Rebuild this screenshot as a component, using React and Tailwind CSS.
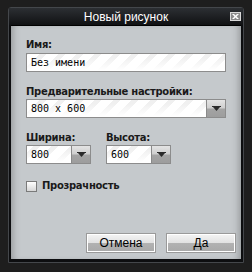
import React from 'react';

const stripes =
  'bg-[linear-gradient(to_bottom,rgba(255,255,255,0)_20%,#ffffff_95%),repeating-linear-gradient(-45deg,#ffffff_0px,#ffffff_8px,#f0f0f0_8px,#f0f0f0_13px)]';

const Arrow = () => (
  <svg width="9" height="6" viewBox="0 0 9 6">
    <rect x="0" y="0" width="9" height="1" fill="#2a2a2a" />
    <polygon points="1,1 8,1 4.5,5" fill="#2a2a2a" />
  </svg>
);

const DropButton = () => (
  <div className="w-[19px] h-full border-l border-[#8a8a8a] bg-[linear-gradient(to_bottom,#e4e4e4_0%,#cfcfcf_45%,#a3a3a3_55%,#9d9d9d_100%)] flex items-center justify-center">
    <Arrow />
  </div>
);

const Field = ({ value, width, select }) => (
  <div
    className={`h-[19px] border border-[#8c8c8c] flex ${stripes}`}
    style={{ width }}
  >
    <div className="flex-1 flex items-center pl-[4px] text-[10px] text-black font-['DejaVu_Sans_Mono',monospace]">
      {value}
    </div>
    {select && <DropButton />}
  </div>
);

const Label = ({ children }) => (
  <div className="text-[10px] leading-[12px] font-bold tracking-[-0.3px] text-[#1a1a1a] font-['DejaVu_Sans',sans-serif]">
    {children}
  </div>
);

const Button = ({ children }) => (
  <div className="w-[70px] h-[20px] border border-[#9a9a9a] p-[1px] bg-white">
    <div className="w-full h-full bg-[linear-gradient(to_bottom,#f2f2f2_0%,#e2e2e2_48%,#b2b2b2_52%,#aaaaaa_100%)] flex items-center justify-center text-[12px] text-black font-['Liberation_Sans',sans-serif]">
      {children}
    </div>
  </div>
);

export default function App() {
  return (
    <div className="w-[252px] h-[272px] bg-[#1e1e1e] pt-[7px] pl-[8px]">
      <div className="w-[236px] h-[256px] rounded-t-[3px] border border-[#44474b] bg-[#0d0e10] flex flex-col">
        <div className="relative h-[17px] flex items-center justify-center bg-[linear-gradient(to_bottom,#2c2f33,#101113)]">
          <span className="text-white text-[12px] font-['Liberation_Sans',sans-serif]">Новый рисунок</span>
          <div className="absolute right-[2px] top-[4px] w-[11px] h-[9px] bg-[#8a8a8a] border border-[#d8d8d8] flex items-center justify-center">
            <svg width="7" height="5" viewBox="0 0 7 5">
              <path d="M0 0h2l1.5 1.5L5 0h2L4.5 2.5L7 5H5L3.5 3.5L2 5H0l2.5-2.5z" fill="#fff" />
            </svg>
          </div>
        </div>
        <div className="flex-1 mx-[2px] mb-[3px] border-t border-[#000] bg-[#c5c9cc] shadow-[inset_7px_0_7px_-5px_rgba(0,0,0,0.25),inset_-7px_0_7px_-5px_rgba(0,0,0,0.25)] pl-[15px] pt-[13px] flex flex-col">
          <Label>Имя:</Label>
          <div className="mt-[2px]">
            <Field value="Без имени" width={200} />
          </div>
          <div className="mt-[14px]">
            <Label>Предварительные настройки:</Label>
          </div>
          <div className="mt-[1px]">
            <Field value="800 x 600" width={200} select />
          </div>
          <div className="mt-[14px] flex gap-[15px]">
            <div className="flex flex-col gap-[1px]">
              <Label>Ширина:</Label>
              <Field value="800" width={65} select />
            </div>
            <div className="flex flex-col gap-[1px]">
              <Label>Высота:</Label>
              <Field value="600" width={65} select />
            </div>
          </div>
          <div className="mt-[16px] flex items-center gap-[5px]">
            <div className="w-[11px] h-[11px] border border-[#7a7a7a] bg-[linear-gradient(to_bottom,#ffffff,#d6d6d6)]" />
            <Label>Прозрачность</Label>
          </div>
          <div className="mt-auto mb-[6px] mr-[5px] flex justify-end gap-[10px]">
            <Button>Отмена</Button>
            <Button>Да</Button>
          </div>
        </div>
      </div>
    </div>
  );
}
